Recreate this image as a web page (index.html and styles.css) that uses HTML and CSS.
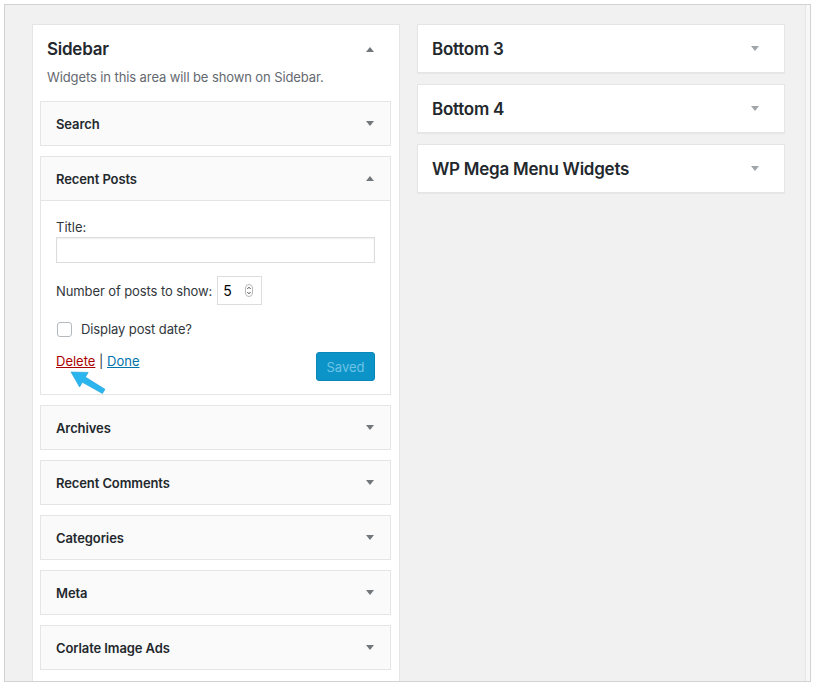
FILE: index.html
```html
<!DOCTYPE html>
<html lang="en">
  <head>
    <meta charset="UTF-8" />
    <title>Widgets</title>
    <link rel="stylesheet" href="styles.css">
  </head>
  <body>
    <div class="skaerm">
      <div class="omraade">
        <!-- venstre kolonne: sidebar med widgets -->
        <section class="sidebar">
          <div class="sidebar-navn">
            <h2>Sidebar</h2>
            <svg class="pil" width="8" height="5" viewBox="0 0 8 5"><polygon points="0,5 8,5 4,0" /></svg>
          </div>
          <p class="beskrivelse">Widgets in this area will be shown on Sidebar.</p>

          <div class="widget">
            <div class="widget-top">
              <h3>Search</h3>
              <svg class="pil" width="8" height="5" viewBox="0 0 8 5"><polygon points="0,0 8,0 4,5" /></svg>
            </div>
          </div>

          <div class="widget aaben">
            <div class="widget-top">
              <h3>Recent Posts</h3>
              <svg class="pil" width="8" height="5" viewBox="0 0 8 5"><polygon points="0,5 8,5 4,0" /></svg>
            </div>
            <div class="widget-inside">
              <label class="felt-titel">Title:</label>
              <input type="text" class="tekstfelt" />
              <div class="antal">
                <span>Number of posts to show:</span>
                <div class="talfelt">
                  <span>5</span>
                  <svg width="8" height="13" viewBox="0 0 8 13">
                    <rect x="0.5" y="0.5" width="7" height="12" rx="3.5" fill="#fff" stroke="#b8b8b8" />
                    <polyline points="2.3,5 4,3.2 5.7,5" fill="none" stroke="#555" stroke-width="1" />
                    <polyline points="2.3,8 4,9.8 5.7,8" fill="none" stroke="#555" stroke-width="1" />
                  </svg>
                </div>
              </div>
              <label class="afkryds"><span class="boks"></span>Display post date?</label>
              <div class="handlinger">
                <div class="links">
                  <a href="#" class="slet">Delete</a> | <a href="#" class="faerdig">Done</a>
                </div>
                <button class="gemt">Saved</button>
              </div>
            </div>
          </div>

          <div class="widget">
            <div class="widget-top">
              <h3>Archives</h3>
              <svg class="pil" width="8" height="5" viewBox="0 0 8 5"><polygon points="0,0 8,0 4,5" /></svg>
            </div>
          </div>
          <div class="widget">
            <div class="widget-top">
              <h3>Recent Comments</h3>
              <svg class="pil" width="8" height="5" viewBox="0 0 8 5"><polygon points="0,0 8,0 4,5" /></svg>
            </div>
          </div>
          <div class="widget">
            <div class="widget-top">
              <h3>Categories</h3>
              <svg class="pil" width="8" height="5" viewBox="0 0 8 5"><polygon points="0,0 8,0 4,5" /></svg>
            </div>
          </div>
          <div class="widget">
            <div class="widget-top">
              <h3>Meta</h3>
              <svg class="pil" width="8" height="5" viewBox="0 0 8 5"><polygon points="0,0 8,0 4,5" /></svg>
            </div>
          </div>
          <div class="widget">
            <div class="widget-top">
              <h3>Corlate Image Ads</h3>
              <svg class="pil" width="8" height="5" viewBox="0 0 8 5"><polygon points="0,0 8,0 4,5" /></svg>
            </div>
          </div>

          <!-- blå pil der peger på Delete -->
          <svg class="markering" width="44" height="32" viewBox="66 366 44 32">
            <polygon points="71,372 88.2,372.4 85.4,377.1 105,389.3 102.4,393.5 82.4,382.3 79.6,387" fill="#2bb5ef" stroke="#1a9fd9" stroke-width="0.6" stroke-linejoin="round" />
          </svg>
        </section>

        <!-- højre kolonne: lukkede sidebars -->
        <div class="kolonne">
          <div class="lukket">
            <h2>Bottom 3</h2>
            <svg class="pil" width="8" height="5" viewBox="0 0 8 5"><polygon points="0,0 8,0 4,5" /></svg>
          </div>
          <div class="lukket">
            <h2>Bottom 4</h2>
            <svg class="pil" width="8" height="5" viewBox="0 0 8 5"><polygon points="0,0 8,0 4,5" /></svg>
          </div>
          <div class="lukket">
            <h2>WP Mega Menu Widgets</h2>
            <svg class="pil" width="8" height="5" viewBox="0 0 8 5"><polygon points="0,0 8,0 4,5" /></svg>
          </div>
        </div>
      </div>
      <div class="rullebjaelke"></div>
    </div>
  </body>
</html>
```

FILE: styles.css
```css
body {
  margin: 0;
  background: #fff;
  font-family: Inter, "Noto Sans", sans-serif;
  color: #23282d;
}

.skaerm {
  margin: 4px 0 0 4px;
  width: 805px;
  height: 676px;
  border: 1px solid #d2d2d2;
  background: #f1f1f1;
  display: flex;
  overflow: hidden;
}

.omraade {
  width: 800px;
  display: flex;
  align-items: flex-start;
  gap: 17px;
  padding: 19px 0 0 27px;
  box-sizing: border-box;
}

.rullebjaelke {
  width: 4px;
  border-left: 1px solid #e6e6e6;
  background: #f8f8f8;
}

.sidebar {
  position: relative;
  width: 368px;
  box-sizing: border-box;
  background: #fff;
  border: 1px solid #e5e5e5;
  box-shadow: 0 1px 1px rgba(0, 0, 0, 0.04);
  padding: 0 8px 10px 7px;
}

.sidebar-navn {
  display: flex;
  align-items: center;
  justify-content: space-between;
  padding: 12px 17px 0 7px;
  height: 24px;
}

h2 {
  margin: 0;
  font-size: 17px;
  font-weight: 600;
  line-height: 24px;
  letter-spacing: -0.25px;
}

.pil {
  fill: #72777c;
}

.beskrivelse {
  margin: 7px 0 15px 7px;
  font-size: 13px;
  line-height: 18px;
  color: #646970;
  letter-spacing: -0.1px;
}

.widget {
  background: #fafafa;
  border: 1px solid #e5e5e5;
  margin-bottom: 10px;
}

.widget-top {
  height: 43px;
  display: flex;
  align-items: center;
  justify-content: space-between;
  padding: 0 16px 0 15px;
}

h3 {
  margin: 0;
  font-size: 13px;
  font-weight: 600;
  letter-spacing: -0.1px;
}

.widget-inside {
  background: #fff;
  border-top: 1px solid #e5e5e5;
  padding: 17px 15px 13px;
  display: flex;
  flex-direction: column;
  font-size: 13px;
  color: #32373c;
}

.felt-titel {
  line-height: 18px;
}

.tekstfelt {
  margin: 1px 0 0;
  height: 26px;
  box-sizing: border-box;
  border: 1px solid #ddd;
  box-shadow: inset 0 1px 2px rgba(0, 0, 0, 0.07);
  padding: 0;
}

.antal {
  margin-top: 13px;
  display: flex;
  align-items: center;
  gap: 5px;
  letter-spacing: -0.1px;
}

.talfelt {
  width: 45px;
  height: 29px;
  box-sizing: border-box;
  border: 1px solid #ddd;
  display: flex;
  align-items: center;
  justify-content: space-between;
  padding: 0 8px 0 5px;
  font-size: 14px;
  color: #000;
}

.afkryds {
  margin-top: 16px;
  display: flex;
  align-items: center;
  height: 16px;
  letter-spacing: -0.1px;
}

.boks {
  width: 15px;
  height: 15px;
  box-sizing: border-box;
  border: 1px solid #b4b9be;
  border-radius: 3px;
  margin: 0 9px 0 1px;
  background: #fff;
}

.handlinger {
  margin-top: 15px;
  display: flex;
  justify-content: space-between;
  align-items: flex-start;
}

.links {
  line-height: 18px;
  color: #32373c;
}

.slet {
  color: #a00;
}

.faerdig {
  color: #0073aa;
}

.gemt {
  width: 59px;
  height: 29px;
  border: 1px solid #0a86b8;
  border-radius: 3px;
  background: #0c94c8;
  color: #6ec3e6;
  font-family: inherit;
  font-size: 13px;
  padding: 0;
}

.markering {
  position: absolute;
  left: 33px;
  top: 341px;
}

.kolonne {
  width: 368px;
  display: flex;
  flex-direction: column;
  gap: 11px;
}

.lukket {
  height: 49px;
  box-sizing: border-box;
  background: #fff;
  border: 1px solid #e5e5e5;
  box-shadow: 0 1px 1px rgba(0, 0, 0, 0.04);
  display: flex;
  align-items: center;
  justify-content: space-between;
  padding: 0 25px 0 14px;
}

.lukket .pil {
  fill: #a0a5aa;
}
```
